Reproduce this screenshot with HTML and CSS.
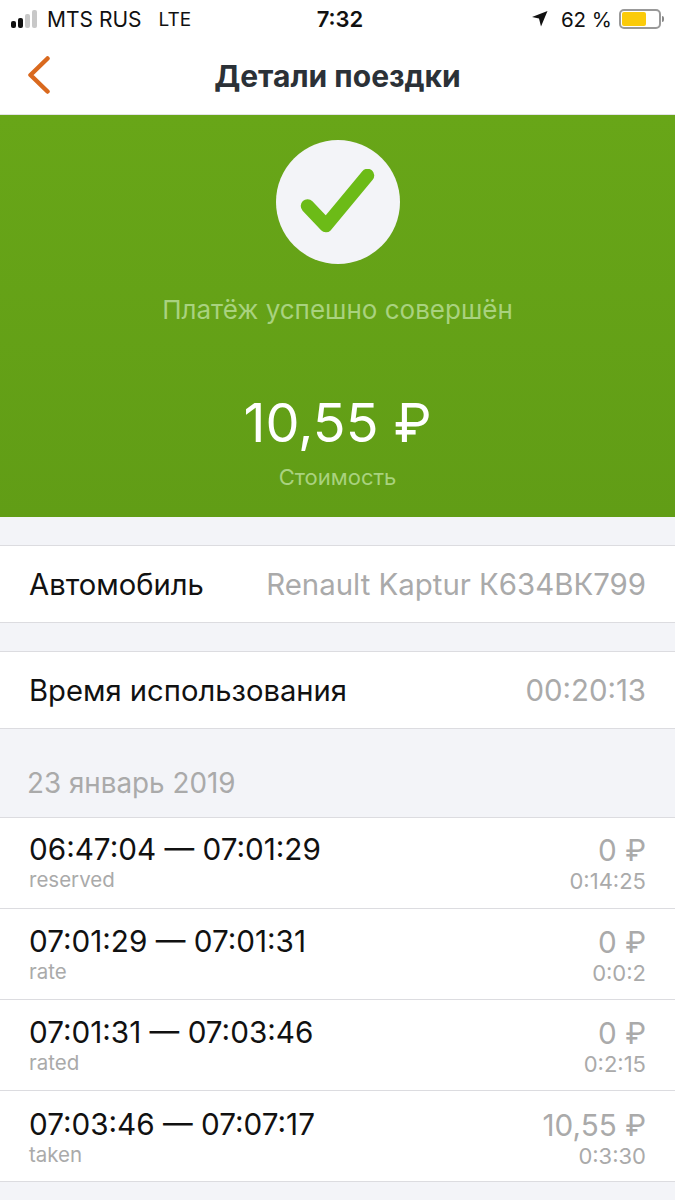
FILE: index.html
```html
<!DOCTYPE html>
<html lang="ru">
<head>
  <meta charset="UTF-8">
  <meta name="viewport" content="width=device-width, initial-scale=1.0">
  <title>Детали поездки</title>
  <link rel="stylesheet" href="styles.css">
</head>
<body>
  <div class="status-bar">
    <div class="status-left">
      <div class="signal">
        <span class="bar bar-1"></span><span class="bar bar-2"></span><span class="bar bar-3"></span><span class="bar bar-4"></span>
      </div>
      <span class="carrier">MTS RUS</span>
      <span class="network">LTE</span>
    </div>
    <div class="status-time">7:32</div>
    <div class="status-right">
      <svg class="location" width="18" height="18" viewBox="0 0 18 18"><path d="M16.5 1 L1 7 L8 8.4 L10 16.5 Z" fill="#111"/></svg>
      <span class="percent">62 %</span>
      <div class="battery"><div class="battery-fill"></div></div>
      <div class="battery-cap"></div>
    </div>
  </div>

  <div class="nav-bar">
    <svg class="back" width="24" height="38" viewBox="0 0 24 38"><path d="M20.5 2.5 L3.5 19 L20.5 35.5" fill="none" stroke="#d9691e" stroke-width="4.5" stroke-linecap="round" stroke-linejoin="round"/></svg>
    <h1>Детали поездки</h1>
  </div>

  <div class="hero">
    <div class="check-circle">
      <svg width="76" height="66" viewBox="0 0 76 66"><path d="M7.5 37 L26 56.5 L67.5 6.5" fill="none" stroke="#6cbb17" stroke-width="13.5" stroke-linecap="round" stroke-linejoin="round"/></svg>
    </div>
    <div class="hero-status">Платёж успешно совершён</div>
    <div class="hero-price">10,55 ₽</div>
    <div class="hero-label">Стоимость</div>
  </div>

  <div class="info-row first">
    <span class="info-name">Автомобиль</span>
    <span class="info-value">Renault Kaptur К634ВК799</span>
  </div>
  <div class="info-row">
    <span class="info-name">Время использования</span>
    <span class="info-value">00:20:13</span>
  </div>

  <div class="date-title">23 январь 2019</div>

  <div class="trips">
    <div class="trip">
      <div>
        <div class="trip-time">06:47:04 — 07:01:29</div>
        <div class="trip-state">reserved</div>
      </div>
      <div class="trip-right">
        <div class="trip-price">0 ₽</div>
        <div class="trip-length">0:14:25</div>
      </div>
    </div>
    <div class="trip">
      <div>
        <div class="trip-time">07:01:29 — 07:01:31</div>
        <div class="trip-state">rate</div>
      </div>
      <div class="trip-right">
        <div class="trip-price">0 ₽</div>
        <div class="trip-length">0:0:2</div>
      </div>
    </div>
    <div class="trip">
      <div>
        <div class="trip-time">07:01:31 — 07:03:46</div>
        <div class="trip-state">rated</div>
      </div>
      <div class="trip-right">
        <div class="trip-price">0 ₽</div>
        <div class="trip-length">0:2:15</div>
      </div>
    </div>
    <div class="trip">
      <div>
        <div class="trip-time">07:03:46 — 07:07:17</div>
        <div class="trip-state">taken</div>
      </div>
      <div class="trip-right">
        <div class="trip-price">10,55 ₽</div>
        <div class="trip-length">0:3:30</div>
      </div>
    </div>
  </div>
</body>
</html>
```

FILE: styles.css
```css
html, body {
  margin: 0;
  height: 1200px;
  overflow: hidden;
}
body {
  font-family: Inter, "Noto Sans", sans-serif;
  background-color: #f3f4f8;
  color: #111;
}
.status-bar {
  height: 38px;
  box-sizing: border-box;
  background: white;
  display: grid;
  grid-template-columns: 1fr auto 1fr;
  align-items: center;
  padding: 0 11px 0 11px;
  font-size: 21px;
}
.status-left {
  display: flex;
  align-items: center;
}
.signal {
  display: flex;
  align-items: flex-end;
  gap: 2px;
  width: 30px;
  height: 18px;
}
.bar {
  width: 5px;
  border-radius: 2px;
  background: #111;
}
.bar-1 {
  height: 7px;
}
.bar-2 {
  height: 10px;
}
.bar-3 {
  height: 14px;
  background: #c8c8c8;
}
.bar-4 {
  height: 18px;
  background: #c8c8c8;
}
.carrier {
  margin-left: 6px;
}
.network {
  margin-left: 17px;
  font-size: 19px;
}
.status-time {
  margin-left: 5px;
  font-size: 22px;
  font-weight: 600;
}
.status-right {
  display: flex;
  align-items: center;
  justify-content: flex-end;
}
.percent {
  margin-left: 12px;
  margin-right: 7px;
  font-size: 20.5px;
}
.battery {
  width: 42px;
  height: 20px;
  box-sizing: border-box;
  border: 2px solid #999;
  border-radius: 5px;
  padding: 1px;
}
.battery-fill {
  width: 24px;
  height: 100%;
  background: #fbcb0a;
  border-radius: 2px;
}
.battery-cap {
  width: 2px;
  height: 6px;
  margin-left: 1px;
  background: #888;
  border-radius: 0 2px 2px 0;
}
.nav-bar {
  height: 76px;
  background: white;
  border-bottom: 1px solid #e3e3e6;
  display: flex;
  align-items: center;
  justify-content: center;
  position: relative;
}
.back {
  position: absolute;
  left: 27px;
  top: 18px;
}
h1 {
  margin: 0;
  font-size: 30px;
  font-weight: 700;
  color: #2b3137;
}
.hero {
  height: 402px;
  background: linear-gradient(#68a618, #619d16);
  display: flex;
  flex-direction: column;
  align-items: center;
}
.check-circle {
  width: 124px;
  height: 124px;
  margin-top: 25px;
  border-radius: 50%;
  background: #f3f4f8;
  display: flex;
  align-items: center;
  justify-content: center;
}
.hero-status {
  margin-top: 30px;
  font-size: 26px;
  line-height: 32px;
  color: #a9d27f;
}
.hero-price {
  margin-top: 64px;
  font-size: 54px;
  line-height: 66px;
  color: white;
}
.hero-label {
  margin-top: 8px;
  font-size: 22px;
  line-height: 26px;
  color: #a9d27f;
}
.info-row {
  height: 76px;
  margin-top: 28px;
  background: white;
  border-top: 1px solid #dcdce0;
  border-bottom: 1px solid #dcdce0;
  display: flex;
  align-items: center;
  justify-content: space-between;
  padding: 0 29px 0 29px;
}
.info-name {
  font-size: 29.2px;
}
.info-value {
  font-size: 29.4px;
  color: #aaa;
}
.date-title {
  height: 88px;
  box-sizing: border-box;
  padding: 37px 27px 0;
  font-size: 27.8px;
  line-height: 34px;
  color: #aaa;
}
.trips {
  background: white;
  border-top: 1px solid #dcdce0;
}
.trip {
  height: 90px;
  border-bottom: 1px solid #dcdce0;
  display: flex;
  justify-content: space-between;
  padding: 0 29px 0 29px;
}
.trip + .trip {
  padding-top: 1px;
  height: 89px;
}
.trip:last-child {
  padding-top: 2px;
  height: 88px;
}
.trip-time {
  margin-top: 12px;
  font-size: 29.7px;
  line-height: 38px;
}
.trip-state {
  font-size: 20.5px;
  line-height: 24px;
  color: #aaa;
}
.trip-length {
  font-size: 22px;
  line-height: 24px;
  color: #aaa;
}
.trip-right {
  text-align: right;
}
.trip-price {
  margin-top: 13px;
  font-size: 29.7px;
  line-height: 38px;
  color: #aaa;
}
```
